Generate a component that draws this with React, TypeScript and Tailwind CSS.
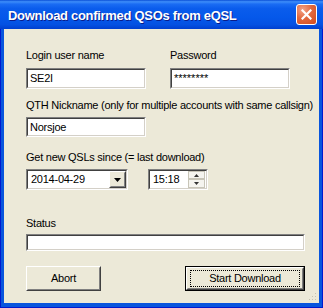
import React from "react";

const FONT = "[font-family:'Liberation_Sans',Arial,sans-serif]";

function Sunken({ className = "", children }: { className?: string; children?: React.ReactNode }) {
  return (
    <div className={`bg-white border border-t-[#808080] border-l-[#808080] border-b-white border-r-white ${className}`}>
      <div className="h-full w-full border border-t-[#404040] border-l-[#404040] border-b-[#d4d0c8] border-r-[#d4d0c8] flex items-center">
        {children}
      </div>
    </div>
  );
}

function Raised({ className = "", children }: { className?: string; children?: React.ReactNode }) {
  return (
    <div className={`bg-[#ece9d8] border border-t-white border-l-white border-b-[#404040] border-r-[#404040] ${className}`}>
      <div className="h-full w-full border border-t-[#ece9d8] border-l-[#ece9d8] border-b-[#808080] border-r-[#808080] flex items-center justify-center">
        {children}
      </div>
    </div>
  );
}

function CloseButton() {
  return (
    <div className="w-[21px] h-[21px] rounded-[3px] border border-white bg-[radial-gradient(circle_at_30%_25%,#f3a388_0%,#e2693f_45%,#d24a1c_100%)] flex items-center justify-center">
      <svg width="11" height="11" viewBox="0 0 11 11">
        <path d="M1.5 1.5 L9.5 9.5 M9.5 1.5 L1.5 9.5" stroke="white" strokeWidth="2.2" strokeLinecap="square" />
      </svg>
    </div>
  );
}

export default function App() {
  return (
    <div className={`w-[323px] h-[308px] flex flex-col bg-[#0855dd] ${FONT}`}>
      {/* Title bar */}
      <div className="h-[29px] shrink-0 flex items-center justify-between pl-[8px] pr-[6px] bg-[linear-gradient(to_bottom,#0a4fd6_0%,#3d8dfa_6%,#1a6cf3_14%,#0a5cec_30%,#0558ea_60%,#0451e2_85%,#003fcf_100%)]">
        <span className="text-white font-bold text-[13px] leading-none tracking-[-0.3px] pt-[1px] [text-shadow:1px_1px_0_#0a1c8a]">
          Download confirmed QSOs from eQSL
        </span>
        <CloseButton />
      </div>

      {/* Frame */}
      <div className="flex-1 flex flex-col px-[4px] pb-[5px] shadow-[inset_1px_0_0_#0019cf,inset_-1px_0_0_#0019cf,inset_0_-1px_0_#0019cf]">
        <div className="relative flex-1 bg-[#ece9d8] pl-[22px] pr-[14px] pt-[20px] text-[11px] leading-[13px] tracking-[-0.25px] text-black">
          {/* Row 1 */}
          <div className="flex gap-[24px]">
            <div className="w-[120px] flex flex-col">
              <div className="h-[13px]">Login user name</div>
              <Sunken className="mt-[6px] h-[21px]">
                <span className="pl-[2px]">SE2I</span>
              </Sunken>
            </div>
            <div className="w-[120px] flex flex-col">
              <div className="h-[13px]">Password</div>
              <Sunken className="mt-[6px] h-[21px]">
                <span className="pl-[2px] tracking-[0px]">********</span>
              </Sunken>
            </div>
          </div>

          {/* QTH */}
          <div className="mt-[10px] h-[13px] whitespace-nowrap">
            QTH Nickname (only for multiple accounts with same callsign)
          </div>
          <Sunken className="mt-[5px] h-[20px] w-[120px]">
            <span className="pl-[2px]">Norsjoe</span>
          </Sunken>

          {/* Date */}
          <div className="mt-[14px] h-[13px]">Get new QSLs since (= last download)</div>
          <div className="mt-[5px] flex gap-[20px]">
            <Sunken className="h-[21px] w-[102px]">
              <span className="pl-[3px] flex-1">2014-04-29</span>
              <Raised className="h-[17px] w-[17px]">
                <svg width="7" height="4" viewBox="0 0 7 4">
                  <path d="M0 0 H7 L3.5 4 Z" fill="black" />
                </svg>
              </Raised>
            </Sunken>
            <Sunken className="h-[21px] w-[60px]">
              <span className="pl-[3px] flex-1">15:18</span>
              <div className="flex flex-col h-[17px] w-[17px] mr-[1px]">
                <div className="h-[8px] border border-[#c8c5b8] bg-[#f5f4ef] flex items-center justify-center">
                  <svg width="5" height="3" viewBox="0 0 5 3">
                    <path d="M0 3 H5 L2.5 0 Z" fill="#333" />
                  </svg>
                </div>
                <div className="h-[9px] border border-[#c8c5b8] bg-[#f5f4ef] flex items-center justify-center">
                  <svg width="5" height="3" viewBox="0 0 5 3">
                    <path d="M0 0 H5 L2.5 3 Z" fill="#333" />
                  </svg>
                </div>
              </div>
            </Sunken>
          </div>

          {/* Status */}
          <div className="mt-[27px] h-[13px]">Status</div>
          <Sunken className="mt-[4px] h-[17px] w-full" />

          {/* Buttons */}
          <div className="mt-[15px] flex justify-between">
            <Raised className="w-[75px] h-[25px]">
              <span>Abort</span>
            </Raised>
            <div className="w-[120px] h-[25px] border border-black">
              <Raised className="w-full h-full">
                <div className="w-[110px] h-[17px] border border-dotted border-black flex items-center justify-center">
                  Start Download
                </div>
              </Raised>
            </div>
          </div>

          {/* resize grip */}
          <svg className="absolute right-[2px] bottom-[2px]" width="10" height="10" viewBox="0 0 10 10">
            <rect x="8" y="2" width="1" height="1" fill="#c5c2b2" />
            <rect x="5" y="5" width="1" height="1" fill="#c5c2b2" />
            <rect x="8" y="5" width="1" height="1" fill="#c5c2b2" />
            <rect x="2" y="8" width="1" height="1" fill="#c5c2b2" />
            <rect x="5" y="8" width="1" height="1" fill="#c5c2b2" />
            <rect x="8" y="8" width="1" height="1" fill="#c5c2b2" />
          </svg>
        </div>
      </div>
    </div>
  );
}
